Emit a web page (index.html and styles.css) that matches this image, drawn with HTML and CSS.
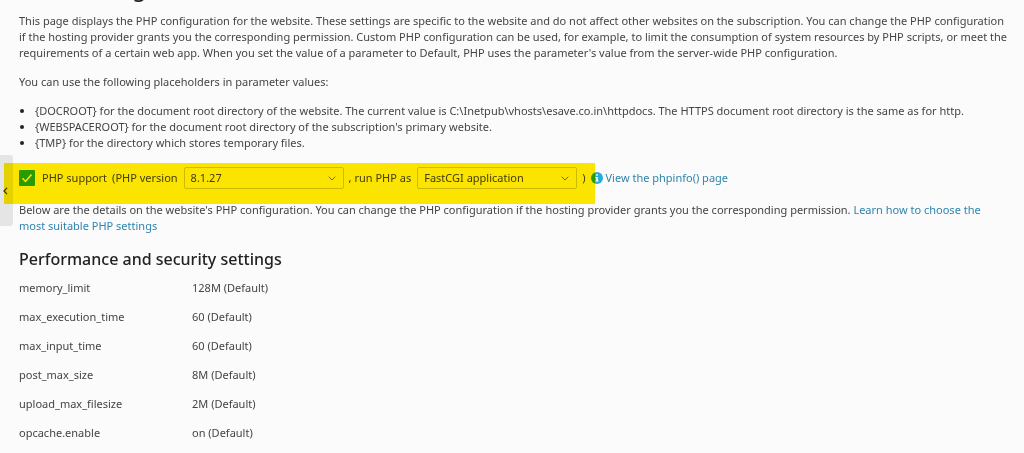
FILE: index.html
```html
<!DOCTYPE html>
<html lang="en">
<head>
<meta charset="utf-8">
<title>PHP Settings</title>
<link rel="stylesheet" href="styles.css">
</head>
<body>
<button class="sidebar-toggle" type="button" aria-label="Expand sidebar">
  <svg width="5" height="8" viewBox="0 0 5 8"><path d="M4 .8 1 4l3 3.200" fill="none" stroke="#333" stroke-width="1.200"/></svg>
</button>
<main class="page">
  <h1 class="page-title">PHP Settings</h1>
  <p class="text">This page displays the PHP configuration for the website. These settings are specific to the website and do not affect other websites on the subscription. You can change the PHP configuration if the hosting provider grants you the corresponding permission. Custom PHP configuration can be used, for example, to limit the consumption of system resources by PHP scripts, or meet the requirements of a certain web app. When you set the value of a parameter to Default, PHP uses the parameter's value from the server-wide PHP configuration.</p>
  <p class="text">You can use the following placeholders in parameter values:</p>
  <ul class="placeholders">
    <li>{DOCROOT} for the document root directory of the website. The current value is C:\Inetpub\vhosts\esave.co.in\httpdocs. The HTTPS document root directory is the same as for http.</li>
    <li>{WEBSPACEROOT} for the document root directory of the subscription's primary website.</li>
    <li>{TMP} for the directory which stores temporary files.</li>
  </ul>
  <form class="support">
    <input class="check" type="checkbox" id="php" checked>
    <label class="support-label" for="php">PHP support</label>
    <label class="version-label" for="version">(PHP version</label>
    <span class="select-box">
      <select class="select" id="version"><option>8.1.27</option></select>
      <svg class="chevron" width="8" height="5" viewBox="0 0 8 5"><path d="M.7.7 4 4 7.300.7" fill="none" stroke="#777" stroke-width="1"/></svg>
    </span>
    <label class="handler-label" for="handler">, run PHP as</label>
    <span class="select-box">
      <select class="select" id="handler"><option>FastCGI application</option></select>
      <svg class="chevron" width="8" height="5" viewBox="0 0 8 5"><path d="M.7.7 4 4 7.300.7" fill="none" stroke="#777" stroke-width="1"/></svg>
    </span>
    <span class="paren">)</span>
    <a class="info-link" href="#"><svg width="12" height="12" viewBox="0 0 12 12"><circle cx="6" cy="6" r="6" fill="#28aade"/><path d="M5.200 2.300h1.600v1.500H5.200zM4.500 4.900h2.300v3.600h.8v1H4.400v-1h.8V5.900h-.7z" fill="#fff"/></svg>View the phpinfo() page</a>
    <span class="marker"></span>
  </form>
  <p class="text">Below are the details on the website's PHP configuration. You can change the PHP configuration if the hosting provider grants you the corresponding permission. <a href="#">Learn how to choose the most suitable PHP settings</a></p>
  <h2 class="section-title">Performance and security settings</h2>
  <dl class="settings">
    <dt>memory_limit</dt><dd>128M (Default)</dd>
    <dt>max_execution_time</dt><dd>60 (Default)</dd>
    <dt>max_input_time</dt><dd>60 (Default)</dd>
    <dt>post_max_size</dt><dd>8M (Default)</dd>
    <dt>upload_max_filesize</dt><dd>2M (Default)</dd>
    <dt>opcache.enable</dt><dd>on (Default)</dd>
  </dl>
</main>
</body>
</html>
```
FILE: styles.css
```css
* { box-sizing: border-box; }
body {
  margin: 0;
  overflow: hidden;
  background: #fbfbfb;
  color: #444;
  font: 11px/16px "Noto Sans", "Open Sans", sans-serif;
}
a { color: #2d84ad; text-decoration: none; }
.page { padding: 0 16px 0 19px; }
.page-title {
  margin: -27px 0 12px;
  font-size: 23px;
  line-height: 28px;
  font-weight: 400;
  color: #222;
}
.text { margin: 0 0 13px; }
.placeholders { margin: 0 0 16px; padding-left: 16px; }
.placeholders li::marker { color: #222; }
.support {
  position: relative;
  display: flex;
  align-items: center;
  height: 22px;
  margin-bottom: 13px;
  white-space: nowrap;
}
.check {
  appearance: none;
  width: 16px;
  height: 16px;
  margin: 0 7px 0 0;
  border-radius: 1px;
  background: #28aa00 url("data:image/svg+xml,%3Csvg xmlns='http://www.w3.org/2000/svg' viewBox='0 0 16 16'%3E%3Cpath d='M3.500 8.200l3 3.200 6-7' fill='none' stroke='white' stroke-width='1.500'/%3E%3C/svg%3E");
}
.support-label { margin-right: 5px; }
.version-label { margin-right: 6px; }
.handler-label { margin: 0 6px 0 5px; }
.select-box { position: relative; width: 160px; }
.select {
  display: block;
  appearance: none;
  width: 100%;
  height: 22px;
  padding: 0 24px 0 6px;
  border: 1px solid #ccc;
  border-radius: 2px;
  background: #fbfbfb;
  color: inherit;
  font: inherit;
}
.chevron { position: absolute; right: 8px; top: 9px; pointer-events: none; }
.paren { margin: 0 5px; }
.info-link { display: flex; align-items: center; gap: 3px; }
.marker {
  position: absolute;
  left: -15px;
  top: -4px;
  width: 591px;
  height: 41px;
  background: #ffe900;
  mix-blend-mode: multiply;
  pointer-events: none;
}
.sidebar-toggle {
  position: absolute;
  left: 0;
  top: 155px;
  width: 13px;
  height: 71px;
  padding: 0 0 0 3px;
  border: 0;
  border-radius: 0 3px 3px 0;
  background: #e5e5e5;
  display: flex;
  align-items: center;
}
.section-title {
  margin: 0 0 9px;
  font-size: 16px;
  line-height: 24px;
  font-weight: 500;
  color: #222;
}
.settings {
  display: grid;
  grid-template-columns: 173px 1fr;
  row-gap: 13px;
  margin: 0;
}
.settings dd { margin: 0; }
```
